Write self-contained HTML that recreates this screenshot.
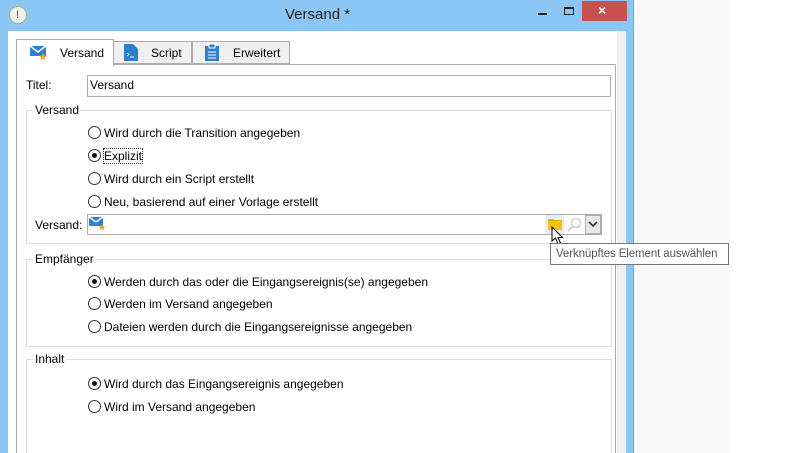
<!DOCTYPE html>
<html style="width:787px;height:453px;overflow:hidden"><head><meta charset="utf-8"><style>
*{box-sizing:border-box;margin:0;padding:0}
body{width:787px;height:453px;overflow:hidden;background:#fff;font-family:"Liberation Sans",sans-serif;font-size:12px;color:#000;position:relative}
.a{position:absolute}
.t{position:absolute;white-space:nowrap;line-height:14px}
.rad{position:absolute;width:13px;height:13px;border:1px solid #333;border-radius:50%;background:#fff}
.rad.on::after{content:"";position:absolute;left:3px;top:3px;width:5px;height:5px;border-radius:50%;background:#111}
.grp{position:absolute;border:1px solid #dcdcdc}
.lg{position:absolute;background:#fff;padding:0 2px;line-height:14px}
</style></head><body>
<div class="a" style="left:633px;top:0;width:97px;height:453px;background:#f9f9f9"></div>
<div class="a" style="left:0;top:0;width:634px;height:453px;background:#8cc6f5;border-right:1px solid #6fa8d8"></div>
<!-- title -->
<div class="a" style="left:9px;top:6px;width:18px;height:18px;border-radius:50%;background:#f0f0f0;border:1px solid #9bbf60"></div>
<div class="t" style="left:16px;top:8px;font-size:11px;color:#555">!</div>
<div class="t" style="left:285px;top:6px;font-size:15px;line-height:18px;color:#222">Versand *</div>
<div class="a" style="left:538px;top:13px;width:9px;height:2px;background:#222"></div>
<div class="a" style="left:564px;top:7px;width:10px;height:8px;border:1px solid #222;border-top-width:2px"></div>
<div class="a" style="left:582px;top:1px;width:45px;height:20px;background:#c75050"></div>
<div class="t" style="left:598px;top:3px;color:#fff;font-size:14px;font-weight:bold">×</div>
<!-- inner -->
<div class="a" style="left:8px;top:31px;width:618px;height:422px;background:#f0f0f0"></div>
<div class="a" style="left:8px;top:31px;width:617px;height:422px;background:#fff;border-right:8px solid #f0f0f0"></div>
<!-- tabs -->
<div class="a" style="left:113px;top:41px;width:79px;height:23px;background:#f0f0f0;border:1px solid #acacac"></div>
<div class="a" style="left:192px;top:41px;width:98px;height:23px;background:#f0f0f0;border:1px solid #acacac"></div>
<div class="a" style="left:16px;top:64px;width:600px;height:389px;border:1px solid #acacac;border-bottom:none;background:#fff"></div>
<div class="a" style="left:16px;top:39px;width:98px;height:27px;background:#fff;border:1px solid #acacac;border-bottom:none"></div>
<svg class="a" style="left:29px;top:44px" width="20" height="16"><path d="M1 2h16v10H1z" fill="#2d7fd0"/><path d="M1 2l8 6 8-6" stroke="#fff" stroke-width="1.5" fill="none"/><path d="M14 9l1.2 2.5 2.6.3-2 1.7.6 2.5-2.4-1.4-2.4 1.4.6-2.5-2-1.7 2.6-.3z" fill="#f3a21c"/></svg>
<div class="t" style="left:60px;top:46px">Versand</div>
<svg class="a" style="left:124px;top:44px" width="14" height="17"><path d="M0 0h9l5 5v12H0z" fill="#2d7fd0"/><path d="M3 9l2 1.5-2 1.5M6 13h4" stroke="#fff" fill="none"/></svg>
<div class="t" style="left:151px;top:46px">Script</div>
<svg class="a" style="left:205px;top:43px" width="14" height="18"><rect x="0" y="3" width="14" height="15" fill="#2d7fd0"/><rect x="4" y="1" width="6" height="4" fill="#2d7fd0" stroke="#fff"/><path d="M3 9h8M3 12h8M3 15h8" stroke="#fff"/></svg>
<div class="t" style="left:233px;top:46px">Erweitert</div>
<!-- Titel -->
<div class="t" style="left:26px;top:78px">Titel:</div>
<div class="a" style="left:87px;top:75px;width:524px;height:22px;border:1px solid #acacac"></div>
<div class="t" style="left:90px;top:78px">Versand</div>
<!-- Versand group -->
<div class="grp" style="left:26px;top:110px;width:586px;height:134px"></div>
<div class="lg" style="left:33px;top:103px">Versand</div>
<div class="rad" style="left:88px;top:126px"></div><div class="t" style="left:104px;top:126px">Wird durch die Transition angegeben</div>
<div class="rad on" style="left:88px;top:149px"></div><div class="t" style="left:104px;top:149px;outline:1px dotted #333;outline-offset:0">Explizit</div>
<div class="rad" style="left:88px;top:172px"></div><div class="t" style="left:104px;top:172px">Wird durch ein Script erstellt</div>
<div class="rad" style="left:88px;top:195px"></div><div class="t" style="left:104px;top:195px">Neu, basierend auf einer Vorlage erstellt</div>
<div class="t" style="left:35px;top:218px">Versand:</div>
<div class="a" style="left:87px;top:214px;width:515px;height:21px;border:1px solid #acacac"></div>
<svg class="a" style="left:89px;top:216px" width="18" height="15"><path d="M0 1h14v9H0z" fill="#2d7fd0"/><path d="M0 1l7 5 7-5" stroke="#fff" stroke-width="1.5" fill="none"/><path d="M13 8l1 2.2 2.4.3-1.8 1.6.5 2.3-2.1-1.2-2.1 1.2.5-2.3-1.8-1.6 2.4-.3z" fill="#f3a21c"/></svg>
<div class="a" style="left:545px;top:215px;width:19px;height:19px;background:#e2eef9"></div>
<svg class="a" style="left:548px;top:218px" width="14" height="12"><path d="M0 1h5l1 1h8v10H0z" fill="#e8b400"/><rect x="0" y="3" width="14" height="9" fill="#f5c400"/></svg>
<svg class="a" style="left:567px;top:217px" width="15" height="15"><circle cx="9" cy="6" r="4.5" fill="none" stroke="#d0d0d0" stroke-width="1.5"/><path d="M6 9l-5 5" stroke="#d0d0d0" stroke-width="2"/></svg>
<div class="a" style="left:585px;top:215px;width:16px;height:19px;background:#e8e8e8;border:1px solid #acacac"></div>
<svg class="a" style="left:588px;top:221px" width="10" height="7"><path d="M1 1l4 4 4-4" stroke="#333" stroke-width="1.6" fill="none"/></svg>
<svg class="a" style="left:551px;top:226px" width="14" height="20"><path d="M1 1v14l3.5-3 2.5 6 2.5-1-2.5-5.5h4.5z" fill="#fff" stroke="#000"/></svg>
<!-- Empfänger -->
<div class="grp" style="left:26px;top:259px;width:586px;height:88px"></div>
<div class="lg" style="left:33px;top:252px">Empfänger</div>
<div class="rad on" style="left:88px;top:275px"></div><div class="t" style="left:104px;top:275px">Werden durch das oder die Eingangsereignis(se) angegeben</div>
<div class="rad" style="left:88px;top:297px"></div><div class="t" style="left:104px;top:297px">Werden im Versand angegeben</div>
<div class="rad" style="left:88px;top:320px"></div><div class="t" style="left:104px;top:320px">Dateien werden durch die Eingangsereignisse angegeben</div>
<!-- Inhalt -->
<div class="grp" style="left:26px;top:359px;width:586px;height:94px;border-bottom:none"></div>
<div class="lg" style="left:33px;top:352px">Inhalt</div>
<div class="rad on" style="left:88px;top:377px"></div><div class="t" style="left:104px;top:377px">Wird durch das Eingangsereignis angegeben</div>
<div class="rad" style="left:88px;top:400px"></div><div class="t" style="left:104px;top:400px">Wird im Versand angegeben</div>
<!-- tooltip -->
<div class="a" style="left:550px;top:243px;width:179px;height:22px;background:#fff;border:1px solid #767676"></div>
<div class="t" style="left:556px;top:247px;color:#555;font-size:11.5px;letter-spacing:-0.1px">Verknüpftes Element auswählen</div>
</body></html>
